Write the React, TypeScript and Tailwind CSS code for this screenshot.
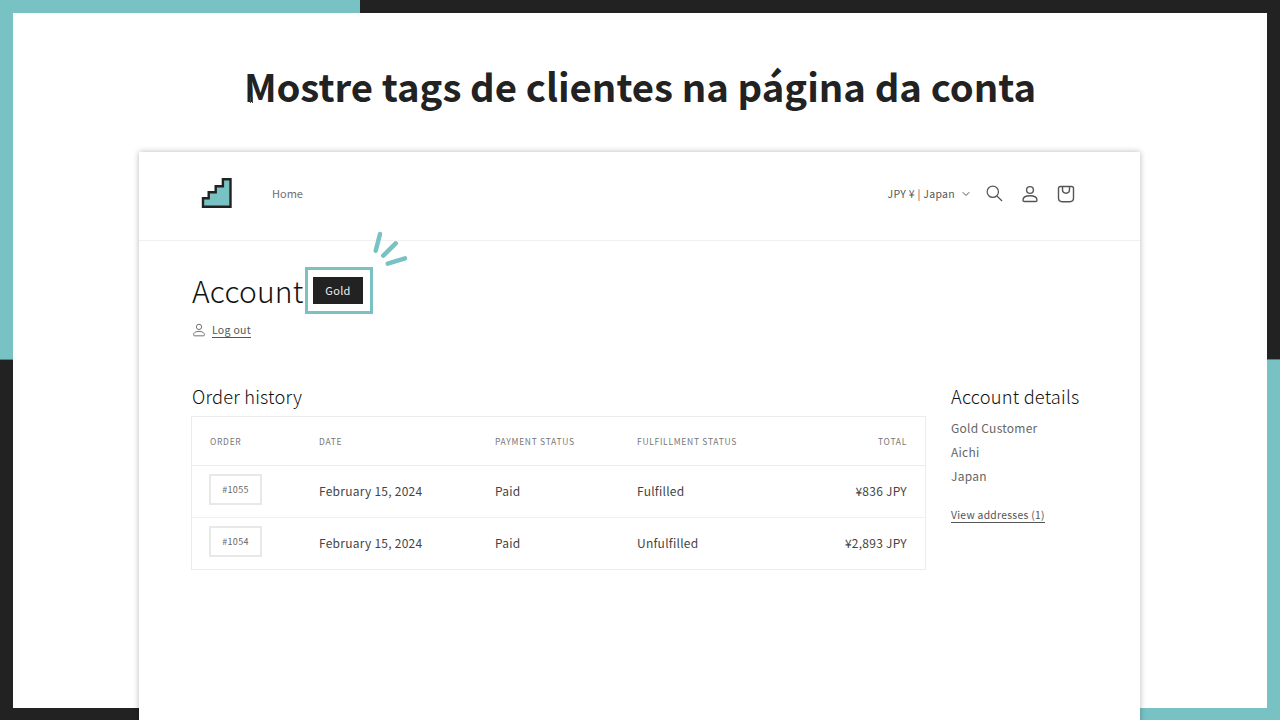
import React from "react";
import { ChevronDown } from "lucide-react";

const orders = [
  { id: "#1055", date: "February 15, 2024", payment: "Paid", status: "Fulfilled", total: "¥836 JPY" },
  { id: "#1054", date: "February 15, 2024", payment: "Paid", status: "Unfulfilled", total: "¥2,893 JPY" },
];

const rowGrid = "grid grid-cols-[109px_176px_142px_1fr_auto] items-center pl-[18px] pr-[18px]";

const UserIcon = ({ size, color, stroke }: { size: number; color: string; stroke: number }) => (
  <svg width={size} height={size} viewBox="0 0 18 18" fill="none" stroke={color} strokeWidth={stroke}>
    <circle cx="9" cy="5" r="3.4" />
    <path d="M2 15.2c0-2.6 2.4-4.4 7-4.4s7 1.800 7 4.400c0 .9-.6 1.300-1.400 1.300H3.400c-.8 0-1.400-.4-1.400-1.300z" />
  </svg>
);

const NavBar = () => (
  <div className="flex h-[89px] items-center border-b border-[#f0f0f0] pb-[5px] pl-[61px] pr-[65px]">
    <svg width="33" height="32" viewBox="0 0 33 32" className="mr-[39px] mt-[-1px]">
      <path d="M3 29.8V21.2H8.700V15.2H15.700V9.200H22.900V2.200H30.500V29.800Z" fill="#78c2c4" stroke="#222" strokeWidth="2.4" />
    </svg>
    <a className="text-[11px] text-[#6f6f6f]">Home</a>
    <div className="ml-auto flex items-center text-[#555]">
      <span className="text-[10.5px] tracking-[0.3px]">JPY ¥ | Japan</span>
      <ChevronDown size={12} className="ml-[5px] mr-[14px]" strokeWidth={2} />
      <svg width="17" height="17" viewBox="0 0 18 18" fill="none" stroke="#555" strokeWidth="1.3" className="mr-[18px]">
        <circle cx="7.200" cy="7.200" r="6" />
        <path d="M11.600 11.600 17 17" />
      </svg>
      <span className="mr-[18px] flex">
        <UserIcon size={18} color="#555" stroke={1.4} />
      </span>
      <svg width="18" height="18" viewBox="0 0 18 18" fill="none" stroke="#555" strokeWidth="1.4">
        <path d="M3.500 1.500h11c1.200 0 2 .8 2 2v9.500c0 2.300-1.400 3.700-3.700 3.700H5.200c-2.300 0-3.700-1.400-3.700-3.700V3.500c0-1.200.8-2 2-2z" />
        <path d="M5.500 2v2.500c0 2.200 1.400 3.700 3.500 3.700s3.500-1.500 3.500-3.700V2" />
      </svg>
    </div>
  </div>
);

const OrderTable = () => (
  <div className="mt-[6px] w-[735px] border border-[#ececec]">
    <div className={`${rowGrid} h-[49px] border-b border-[#ececec] text-[8.5px] tracking-[0.7px] text-[#777]`}>
      <span>ORDER</span>
      <span>DATE</span>
      <span>PAYMENT STATUS</span>
      <span>FULFILLMENT STATUS</span>
      <span className="text-right">TOTAL</span>
    </div>
    {orders.map((o, i) => (
      <div
        key={o.id}
        className={`${rowGrid} text-[12px] tracking-[0.25px] text-[#444] ${i === 0 ? "h-[52px] border-b border-[#f0f0f0]" : "h-[51px]"}`}
      >
        <span className="mb-[4px] ml-[-1px] flex h-[31px] w-[53px] items-center justify-center border-2 border-[#e8e8e8] text-[9px] tracking-[0.3px] text-[#666]">
          {o.id}
        </span>
        <span className="mb-[1px]">{o.date}</span>
        <span className="mb-[1px]">{o.payment}</span>
        <span className="mb-[1px]">{o.status}</span>
        <span className="mb-[1px] text-right">{o.total}</span>
      </div>
    ))}
  </div>
);

const AccountPanel = () => (
  <div className="relative z-10 ml-[126px] mt-[35px] h-[640px] w-[1001px] shrink-0 self-start bg-white shadow-[0_0_6px_rgba(0,0,0,0.28)]">
    <NavBar />
    <div className="pl-[52px]">
      <div className="ml-[1px] mt-[25px] flex items-center">
        <h2 className="text-[30px] font-light leading-[48px] tracking-[0.2px] text-[#111]">Account</h2>
        <div className="relative ml-[1px] flex h-[47px] w-[68px] items-center justify-center border-[3px] border-[#78c2c4]">
          <span className="mr-[2px] flex h-[27px] w-[50px] items-center justify-center bg-[#222] pl-[1px] text-[11px] tracking-[0.3px] text-[#eee]">
            Gold
          </span>
          <svg width="40" height="40" viewBox="0 0 40 40" className="absolute left-[62px] top-[-40px]" fill="none" stroke="#78c2c4" strokeWidth="4.5" strokeLinecap="round">
            <path d="M10 4 5.700 20.700" />
            <path d="M25.700 13.300 13.300 25.700" />
            <path d="M35 28.300 17.700 33.700" />
          </svg>
        </div>
      </div>
      <div className="ml-[1px] mt-[6px] flex h-[20px] items-center text-[#555]">
        <UserIcon size={14} color="#666" stroke={1.2} />
        <a className="ml-[6px] border-b border-[#555] text-[10.5px] leading-[15px] tracking-[0.3px]">Log out</a>
      </div>
      <div className="mt-[42px] flex">
        <div>
          <h3 className="pl-[1px] text-[18.25px] font-light leading-[28px] tracking-[0.2px] text-[#111]">Order history</h3>
          <OrderTable />
        </div>
        <div className="ml-[25px]">
          <h3 className="text-[18.25px] font-light leading-[28px] tracking-[0.2px] text-[#111]">Account details</h3>
          <div className="mt-[6px] text-[12px] leading-[24px] tracking-[0.25px] text-[#666]">
            <p>Gold Customer</p>
            <p>Aichi</p>
            <p>Japan</p>
          </div>
          <a className="mt-[20px] inline-block border-b border-[#555] text-[10.3px] leading-[14px] tracking-[0.3px] text-[#555]">
            View addresses (1)
          </a>
        </div>
      </div>
    </div>
  </div>
);

const App = () => {
  return (
    <div className="flex h-[720px] w-[1280px] flex-col overflow-hidden bg-[#222] font-['Noto_Sans_CJK_JP','Noto_Sans',sans-serif]">
      <div className="flex h-[13px] shrink-0">
        <div className="w-[360px] bg-[#78c2c4]" />
        <div className="flex-1 bg-[#222]" />
      </div>
      <div className="flex h-[695px] shrink-0">
        <div className="flex w-[13px] flex-col">
          <div className="h-[347px] border-b border-[#4d8587] bg-[#78c2c4]" />
          <div className="flex-1 bg-[#222]" />
        </div>
        <div className="flex flex-1 flex-col items-center bg-white">
          <h1 className="relative mt-[42px] h-[62px] shrink-0 text-[38.3px] font-bold leading-[62px] text-[#222]">
            Mostre tags de clientes na página da conta
            <span className="absolute left-[6px] top-[42px] h-[6px] w-[3px] border-x border-[#444]" />
          </h1>
          <AccountPanel />
        </div>
        <div className="flex w-[13px] flex-col">
          <div className="h-[347px] border-b border-[#4d8587] bg-[#222]" />
          <div className="flex-1 bg-[#78c2c4]" />
        </div>
      </div>
      <div className="flex h-[12px] shrink-0">
        <div className="w-[640px] bg-[#222]" />
        <div className="flex-1 bg-[#78c2c4]" />
      </div>
    </div>
  );
};

export default App;
